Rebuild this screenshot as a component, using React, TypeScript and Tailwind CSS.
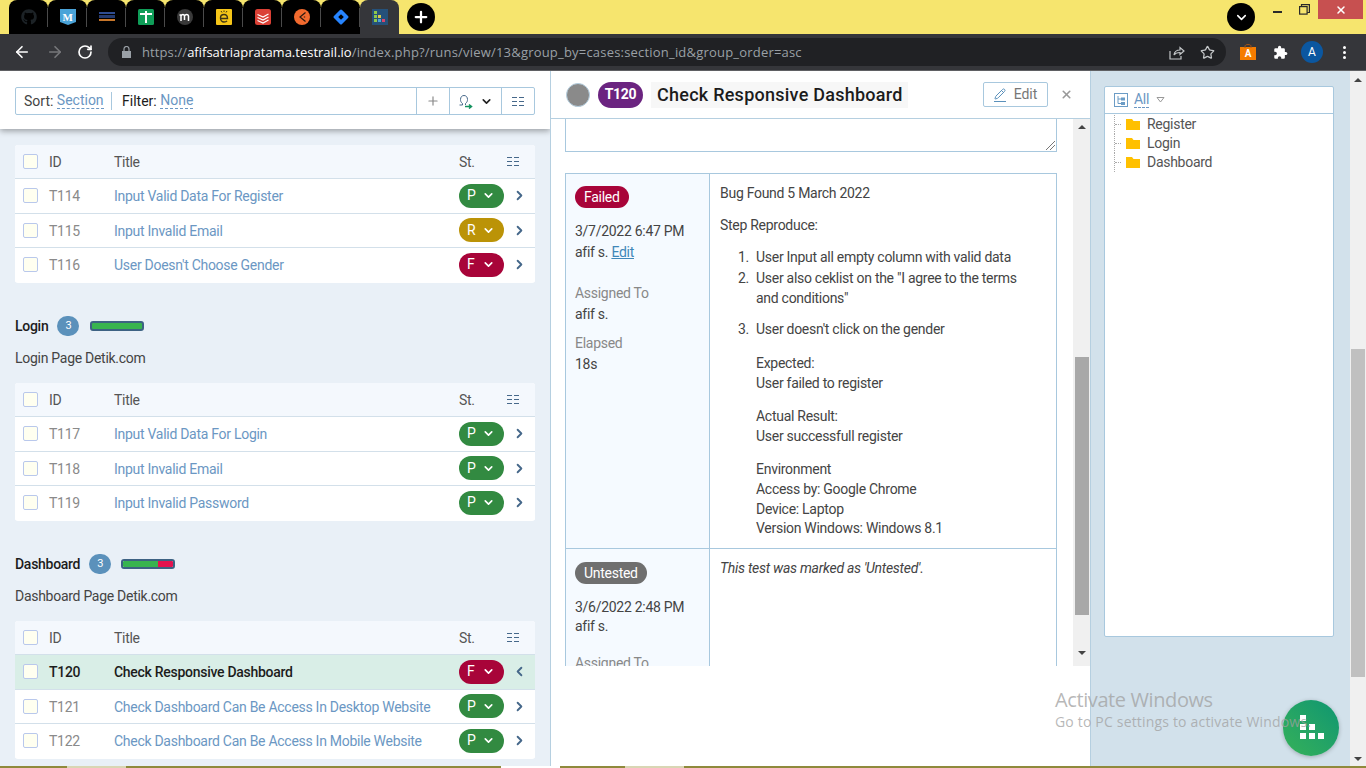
import React from "react";
import { FaGithub } from "react-icons/fa";
import { ArrowLeft, ArrowRight, RotateCw, Star, Plus, ChevronDown, ChevronRight, ChevronLeft, Pencil, X } from "lucide-react";

type St = "P" | "R" | "F";

function Columns() {
  return (
    <svg width="12" height="11" viewBox="0 0 12 11" fill="none" stroke="#46688a" strokeWidth="1" className="block">
      <path d="M0 1.500h5M7 1.500h5M0 5.500h5M7 5.500h5M0 9.500h5M7 9.500h5" />
    </svg>
  );
}

function Check() {
  return <span className="w-[15px] h-[15px] shrink-0 bg-[#fffff0] border border-[#b9c8ec] rounded-[2px]" />;
}

function Pill({ s }: { s: St }) {
  const bg = s === "P" ? "bg-[#328a41]" : s === "R" ? "bg-[#bb9307]" : "bg-[#a80439]";
  return (
    <span className={`w-[45px] h-[24px] rounded-full ${bg} text-white text-[14px] flex items-center pl-[8px] gap-[5px] shrink-0`}>
      <span className="w-[10px]">{s}</span>
      <ChevronDown size={13} strokeWidth={3} />
    </span>
  );
}

function Row({ id, title, s, active }: { id: string; title: string; s: St; active?: boolean }) {
  return (
    <div className={`h-[34.5px] flex items-center pl-[8px] border-t border-[#d3e0ea] ${active ? "bg-[#d9eee7]" : "bg-white"}`}>
      <Check />
      <span className={`ml-[11px] pt-[2px] w-[65px] text-[14px] ${active ? "text-[#1c1c1c] font-medium" : "text-[#8a8a8a]"}`}>{id}</span>
      <span className={`flex-1 pt-[2px] text-[14px] ${active ? "text-[#1c1c1c] font-medium" : "text-[#6b97c3]"}`}>{title}</span>
      <Pill s={s} />
      <span className="w-[31px] flex justify-center text-[#46688a]">
        {active ? <ChevronLeft size={15} strokeWidth={3} /> : <ChevronRight size={15} strokeWidth={3} />}
      </span>
    </div>
  );
}

function CaseTable({ rows }: { rows: { id: string; title: string; s: St; active?: boolean }[] }) {
  return (
    <div className="rounded-[3px] overflow-hidden mx-[15px] bg-white pb-[1.5px]">
      <div className="h-[33px] bg-[#f4f8fd] flex items-center pl-[8px] text-[14px] text-[#555]">
        <Check />
        <span className="ml-[11px] pt-[2px] w-[65px]">ID</span>
        <span className="flex-1 pt-[2px]">Title</span>
        <span className="w-[48px] pt-[2px]">St.</span>
        <span className="w-[28px]"><Columns /></span>
      </div>
      {rows.map((r) => <Row key={r.id} {...r} />)}
    </div>
  );
}

function Section({ name, desc, bar, rows }: { name: string; desc: string; bar: React.ReactNode; rows: { id: string; title: string; s: St; active?: boolean }[] }) {
  return (
    <div>
      <div className="mx-[15px] h-[24px] flex items-center">
        <span className="text-[14px] pt-[1px] font-medium text-[#1c1c1c]">{name}</span>
        <span className="ml-[9px] w-[22px] h-[20px] rounded-full bg-[#5b91bb] text-white text-[11px] flex items-center justify-center">3</span>
        {bar}
      </div>
      <div className="mx-[15px] mt-[10px] h-[20px] leading-[20px] text-[14px] text-[#444]">{desc}</div>
      <div className="mt-[15px]"><CaseTable rows={rows} /></div>
    </div>
  );
}

function Tab({ children, active }: { children: React.ReactNode; active?: boolean }) {
  return (
    <div className={`w-[39px] h-[34px] relative flex items-center justify-center rounded-t-[8px] ${active ? "bg-[#35363a]" : "bg-black"}`}>
      {children}
      {!active && <span className="absolute right-0 top-[8px] w-px h-[19px] bg-[#4a4a4a]" />}
    </div>
  );
}

function Favicons() {
  return (
    <>
      <Tab><FaGithub size={16} color="#1c2226" /></Tab>
      <Tab>
        <svg width="16" height="16" viewBox="0 0 16 16"><path d="M0 0h16v13l-8 3-8-3z" fill="#4aa3d8" /></svg>
        <span className="absolute text-white text-[11px] font-bold leading-none font-[family-name:'Liberation_Serif',serif]">M</span>
      </Tab>
      <Tab>
        <svg width="16" height="10" viewBox="0 0 16 10"><rect y="0" width="16" height="2" fill="#2f4d92" /><rect y="3" width="16" height="3" fill="#243a6f" /><rect y="7" width="16" height="2" fill="#c7762a" /></svg>
      </Tab>
      <Tab>
        <svg width="16" height="16" viewBox="0 0 16 16"><rect width="16" height="16" rx="1.500" fill="#0f9d58" /><path d="M2 5h12M8 2v12" stroke="#fff" strokeWidth="2" /></svg>
      </Tab>
      <Tab>
        <svg width="16" height="16" viewBox="0 0 16 16"><circle cx="8" cy="8" r="8" fill="#3a3a3a" /><path d="M4 12V6.500M4 7c1-2 3-2 3.500 0v4M7.500 7c1-2 3.500-2 4 0v5M2.500 6h2" stroke="#fff" strokeWidth="1.500" fill="none" /></svg>
      </Tab>
      <Tab>
        <svg width="16" height="16" viewBox="0 0 16 16"><rect width="16" height="16" rx="1" fill="#f5c518" /><path d="M4.500 9.500h7c0-3-1.500-4-3.500-4s-3.500 1.500-3.500 3.500 1.500 4 3.500 4c1.500 0 2.500-.5 3-1.200" stroke="#3d3315" strokeWidth="1.400" fill="none" /><path d="M5 2l1 1.500M8 1.500V3M11 2l-1 1.500" stroke="#3d3315" strokeWidth="1" /></svg>
      </Tab>
      <Tab>
        <svg width="16" height="16" viewBox="0 0 16 16"><rect width="16" height="16" rx="2.500" fill="#db4035" /><path d="M2.500 5.500l5.500 2.500 5.500-3M2.500 8.500l5.500 2.500 5.500-3M2.500 11.500l5.500 2.500 5.500-3" stroke="#fff" strokeWidth="1.200" fill="none" /></svg>
      </Tab>
      <Tab>
        <svg width="16" height="16" viewBox="0 0 16 16"><circle cx="8" cy="8" r="8" fill="#f26a2e" /><path d="M11.500 3.500L6 8l5.500 4.500M9.800 8h1.400" stroke="#2a1a10" strokeWidth="1.200" fill="none" /></svg>
      </Tab>
      <Tab>
        <svg width="16" height="16" viewBox="0 0 16 16"><rect x="2.300" y="2.300" width="11.400" height="11.400" rx="1.500" transform="rotate(45 8 8)" fill="#2684ff" /><rect x="6" y="6" width="4" height="4" transform="rotate(45 8 8)" fill="#000" /></svg>
      </Tab>
      <Tab active>
        <svg width="16" height="16" viewBox="0 0 16 16"><rect width="16" height="16" fill="#25517a" /><rect x="2" y="2" width="3" height="3" fill="#8fc84a" /><rect x="2" y="6" width="3" height="3" fill="#8fc84a" /><rect x="6" y="6" width="3" height="3" fill="#d9c94a" /><rect x="2" y="10" width="3" height="3" fill="#8fc84a" /><rect x="6" y="10" width="3" height="3" fill="#4aa3d8" /><rect x="10" y="10" width="3" height="3" fill="#d9456a" /></svg>
      </Tab>
    </>
  );
}

function Folder({ label }: { label: string }) {
  return (
    <div className="h-[19px] flex items-center">
      <span className="ml-[9px] w-[7px] h-full border-l border-dotted border-[#aaa] flex items-center">
        <span className="w-full border-t border-dotted border-[#aaa]" />
      </span>
      <svg width="14" height="13" viewBox="0 0 14 13" className="ml-[5px] shrink-0"><path d="M0 1h6l1.500 2H14v9H0z" fill="#ffc000" /></svg>
      <span className="ml-[7px] text-[14px] text-[#555]">{label}</span>
    </div>
  );
}

function P({ children, cls = "" }: { children: React.ReactNode; cls?: string }) {
  return <div className={`leading-[20px] ${cls}`}>{children}</div>;
}

export default function App() {
  return (
    <div className="w-[1366px] h-[768px] overflow-hidden relative flex flex-col tracking-[-0.28px] font-[family-name:Roboto,'Noto_Sans',sans-serif]">
      {/* Title bar */}
      <div className="h-[34px] bg-[#f6e56e] flex items-start shrink-0">
        <div className="ml-[9px] flex"><Favicons /></div>
        <div className="ml-[8px] mt-[3px] w-[28px] h-[28px] rounded-full bg-black flex items-center justify-center text-white">
          <Plus size={18} strokeWidth={3} />
        </div>
        <div className="flex-1" />
        <div className="mt-[3px] w-[28px] h-[28px] rounded-full bg-black flex items-center justify-center text-white">
          <ChevronDown size={15} strokeWidth={2.500} />
        </div>
        <div className="ml-[18px] mt-[11px] w-[9px] h-[2px] bg-[#2a2a2a]" />
        <svg width="11" height="11" viewBox="0 0 11 11" fill="none" stroke="#2a2a2a" strokeWidth="1.200" className="ml-[17px] mt-[4px]"><rect x="0.600" y="2.600" width="7.500" height="7.500" /><path d="M2.500 2.500V.6h7.900v7.900H8.200" /></svg>
        <div className="ml-[8px] w-[45px] h-[19px] bg-[#c75050] flex items-center justify-center text-white mr-[3px]">
          <X size={12} strokeWidth={3} />
        </div>
      </div>
      {/* Toolbar */}
      <div className="h-[36px] bg-[#35363a] flex items-center shrink-0 text-white tracking-normal">
        <span className="ml-[13px] w-[18px]"><ArrowLeft size={18} strokeWidth={2.200} /></span>
        <span className="ml-[15px] w-[18px] text-[#77787b]"><ArrowRight size={18} strokeWidth={2.200} /></span>
        <span className="ml-[13px] w-[18px]"><RotateCw size={16} strokeWidth={2.500} /></span>
        <div className="ml-[13px] w-[1118px] h-[28px] rounded-full bg-[#202124] flex items-center">
          <svg width="9" height="12" viewBox="0 0 9 12" className="ml-[14px]" fill="#9aa0a6"><path d="M0 5h9v7H0z" /><path d="M2 5V3a2.500 2.500 0 015 0v2" fill="none" stroke="#9aa0a6" strokeWidth="1.200" /></svg>
          <span className="ml-[11px] pt-[1px] text-[13px] text-[#9aa0a6] font-[family-name:'Open_Sans',sans-serif]">
            <span className="tracking-[0.1px]">https://</span><span className="text-white tracking-normal">afifsatriapratama.testrail.io</span><span className="tracking-[0.2px]">/index.php?/runs/view/13&amp;group_by=cases:section_id&amp;group_order=asc</span>
          </span>
          <span className="flex-1" />
          <svg width="16" height="15" viewBox="0 0 16 15" fill="none" stroke="#c4c7c9" strokeWidth="1.200" className="mr-[15px]">
            <path d="M1 6v8h11v-3M5 10c.5-3.500 3-5 6-5V2.500L15 6l-4 3.500V7.500C8.500 7.500 6.500 8 5 10z" />
          </svg>
          <Star size={15} color="#c4c7c9" strokeWidth={2} className="mr-[11px]" />
        </div>
        <div className="ml-[14px] w-[16px] h-[16px] relative flex items-center justify-center">
          <svg width="16" height="16" viewBox="0 0 16 16" className="absolute inset-0"><path d="M0 3h16v13H0z" fill="#f57c00" /><path d="M5 4V2.500C5 1 6 .6 8 .6s3 .4 3 1.900V4" fill="none" stroke="#a8561a" strokeWidth="1" /></svg>
          <span className="relative pt-[2px] text-[10px] font-bold">A</span>
        </div>
        <svg width="15" height="15" viewBox="0 0 24 24" fill="#fff" className="ml-[17px] shrink-0">
          <path d="M20.500 11H19V7a2 2 0 00-2-2h-4V3.500a2.500 2.500 0 00-5 0V5H4a2 2 0 00-2 2v3.800h1.500a2.700 2.700 0 010 5.400H2V20a2 2 0 002 2h3.800v-1.500a2.700 2.700 0 015.400 0V22H17a2 2 0 002-2v-4h1.500a2.500 2.500 0 000-5z" />
        </svg>
        <div className="ml-[13px] w-[22px] h-[22px] rounded-full bg-[#0b57a0] text-[12px] flex items-center justify-center">A</div>
        <div className="ml-[20px] flex flex-col gap-[2px]">
          <span className="w-[3px] h-[3px] rounded-full bg-white" />
          <span className="w-[3px] h-[3px] rounded-full bg-white" />
          <span className="w-[3px] h-[3px] rounded-full bg-white" />
        </div>
      </div>

      {/* Body */}
      <div className="flex h-[696px] shrink-0 border-t border-[#5f6063]">
        {/* Left */}
        <div className="w-[550px] bg-[#e9f0f7] flex flex-col overflow-hidden shrink-0">
          <div className="h-[58px] bg-white shadow-[0_2px_6px_rgba(0,0,0,0.35)] shrink-0 px-[15px] pt-[16px] relative">
            <div className="h-[28px] border border-[#a8c8de] rounded-[2px] flex items-center text-[14px] text-[#444] tracking-normal">
              <div className="flex-1 flex items-center pl-[8px]">
                <span>Sort:&nbsp;</span>
                <span className="text-[#6b97c3] border-b border-dashed border-[#6b97c3] leading-[15px]">Section</span>
                <span className="w-px h-[18px] bg-[#a8c8de] mx-[7px]" />
                <span className="text-[#1c1c1c]">&nbsp;Filter:&nbsp;</span>
                <span className="text-[#6b97c3] border-b border-dashed border-[#6b97c3] leading-[15px]">None</span>
              </div>
              <div className="w-[33px] h-full border-l border-[#a8c8de] flex items-center justify-center text-[#888]"><Plus size={14} strokeWidth={2} /></div>
              <div className="w-[52px] h-full border-l border-[#a8c8de] flex items-center justify-center gap-[7px]">
                <svg width="15" height="15" viewBox="0 0 15 15" fill="none">
                  <path d="M1.500 11h3V9.500C3 8.500 2.500 7 2.500 5.500 2.500 3 4 1.500 6 1.500S9.500 3 9.500 5.500c0 1.500-.5 3-2 4V11" stroke="#46688a" strokeWidth="1" />
                  <path d="M7 12.500h6M11 10.500l2.500 2-2.500 2" stroke="#13925f" strokeWidth="1.500" />
                </svg>
                <ChevronDown size={13} strokeWidth={3} color="#222" />
              </div>
              <div className="w-[33px] h-full border-l border-[#a8c8de] flex items-center justify-center"><Columns /></div>
            </div>
          </div>
          <div className="pt-[16px]">
            <CaseTable rows={[
              { id: "T114", title: "Input Valid Data For Register", s: "P" },
              { id: "T115", title: "Input Invalid Email", s: "R" },
              { id: "T116", title: "User Doesn't Choose Gender", s: "F" },
            ]} />
            <div className="mt-[31px]">
              <Section name="Login" desc="Login Page Detik.com"
                bar={<span className="ml-[11px] w-[54px] h-[10px] rounded-[3px] bg-[#38b44f] border-2 border-[#3d6283]" />}
                rows={[
                  { id: "T117", title: "Input Valid Data For Login", s: "P" },
                  { id: "T118", title: "Input Invalid Email", s: "P" },
                  { id: "T119", title: "Input Invalid Password", s: "P" },
                ]} />
            </div>
            <div className="mt-[31px]">
              <Section name="Dashboard" desc="Dashboard Page Detik.com"
                bar={<span className="ml-[10px] w-[54px] h-[10px] rounded-[3px] border-2 border-[#3d6283] flex overflow-hidden"><span className="w-[35px] bg-[#38b44f]" /><span className="flex-1 bg-[#e3134f]" /></span>}
                rows={[
                  { id: "T120", title: "Check Responsive Dashboard", s: "F", active: true },
                  { id: "T121", title: "Check Dashboard Can Be Access In Desktop Website", s: "P" },
                  { id: "T122", title: "Check Dashboard Can Be Access In Mobile Website", s: "P" },
                ]} />
            </div>
          </div>
        </div>

        {/* Middle */}
        <div className="w-[540px] bg-white border-l border-[#b5cfe0] shrink-0 flex flex-col">
          <div className="h-[48px] border-b border-[#b5cfe0] flex items-center shrink-0 pl-[15px]">
            <span className="w-[24px] h-[24px] rounded-full bg-[#8a8a8a] border border-[#b5cfe0]" />
            <span className="ml-[8px] w-[45px] h-[26px] rounded-full bg-[#6b2480] text-white text-[14px] font-bold flex items-center justify-center">T120</span>
            <span className="ml-[8px] w-[257px] h-[26px] bg-[#f7f7f7] pl-[6px] text-[18px] font-medium text-[#1c1c1c] leading-[26px] tracking-[0.25px]">Check Responsive Dashboard</span>
            <div className="ml-[75px] w-[65px] h-[25px] border border-[#a8c8de] rounded-[2px] flex items-center justify-center gap-[8px] text-[14px] text-[#777] tracking-normal">
              <span className="border-b border-[#5b91bb] pb-[1px]"><Pencil size={12} color="#5b91bb" /></span>
              Edit
            </div>
            <span className="ml-[12px] text-[#999]"><X size={13} strokeWidth={3} /></span>
          </div>
          <div className="h-[547px] shrink-0 flex overflow-hidden">
            <div className="flex-1 pl-[14px] pr-[16px] overflow-hidden">
              <div className="h-[33px] border-x border-b border-[#a8c8de] relative">
                <svg width="9" height="9" viewBox="0 0 9 9" className="absolute right-[1px] bottom-[1px]" stroke="#777" strokeWidth="1"><path d="M0 9L9 0M4 9l5-5" /></svg>
              </div>
              <div className="mt-[21px] border border-[#a8c8de] text-[14px] text-[#444]">
                <div className="flex h-[375px] border-b border-[#a8c8de]">
                  <div className="w-[144px] bg-[#f5faff] border-r border-[#a8c8de] pl-[9px] pt-[12px] shrink-0">
                    <span className="inline-flex h-[22px] px-[9px] items-center rounded-full bg-[#a80439] text-white">Failed</span>
                    <P cls="mt-[13px]">3/7/2022 6:47 PM</P>
                    <P cls="mt-[1px]">afif s. <span className="text-[#3f87b8] underline">Edit</span></P>
                    <P cls="mt-[21px] text-[#888]">Assigned To</P>
                    <P cls="mt-[1px]">afif s.</P>
                    <P cls="mt-[9px] text-[#888]">Elapsed</P>
                    <P cls="mt-[1px]">18s</P>
                  </div>
                  <div className="flex-1 pl-[10px] pt-[9px]">
                    <P>Bug Found 5 March 2022</P>
                    <P cls="mt-[12px]">Step Reproduce:</P>
                    <div className="mt-[12px] flex"><span className="w-[36px] text-right pr-[7px]">1.</span><P>User Input all empty column with valid data</P></div>
                    <div className="flex"><span className="w-[36px] text-right pr-[7px]">2.</span><P>User also ceklist on the "I agree to the terms<br />and conditions"</P></div>
                    <div className="mt-[11px] flex"><span className="w-[36px] text-right pr-[7px]">3.</span><P>User doesn't click on the gender</P></div>
                    <div className="ml-[36px]">
                      <P cls="mt-[13px]">Expected:</P>
                      <P>User failed to register</P>
                      <P cls="mt-[13px]">Actual Result:</P>
                      <P>User successfull register</P>
                      <P cls="mt-[13px]">Environment</P>
                      <P>Access by: Google Chrome</P>
                      <P>Device: Laptop</P>
                      <P cls="-mt-px">Version Windows: Windows 8.1</P>
                    </div>
                  </div>
                </div>
                <div className="flex h-[200px]">
                  <div className="w-[144px] bg-[#f5faff] border-r border-[#a8c8de] pl-[9px] pt-[13px] shrink-0">
                    <span className="inline-flex h-[22px] px-[9px] items-center rounded-full bg-[#6f6f6f] text-white">Untested</span>
                    <P cls="mt-[13px]">3/6/2022 2:48 PM</P>
                    <P cls="-mt-px">afif s.</P>
                    <P cls="mt-[17px] text-[#888]">Assigned To</P>
                  </div>
                  <div className="flex-1 pl-[10px] pt-[9px] italic"><P>This test was marked as 'Untested'.</P></div>
                </div>
              </div>
            </div>
            <div className="w-[17px] bg-[#f0f0f0] flex flex-col items-center shrink-0">
              <span className="mt-[6px] w-0 h-0 border-x-[4px] border-x-transparent border-b-[4px] border-b-[#444]" />
              <span className="mt-[228px] w-[14px] h-[258px] bg-[#a8a8a8]" />
              <span className="mt-[36px] w-0 h-0 border-x-[4px] border-x-transparent border-t-[4px] border-t-[#444]" />
            </div>
          </div>
        </div>

        {/* Right */}
        <div className="w-[260px] bg-[#d2e1eb] border-l border-[#b5cfe0] pl-[13px] pt-[15px] shrink-0">
          <div className="w-[230px] h-[551px] bg-white border border-[#a8c8de] rounded-[2px]">
            <div className="h-[27px] border-b border-[#a8c8de] flex items-center pl-[9px]">
              <svg width="14" height="14" viewBox="0 0 14 14" fill="none" stroke="#6b9cc6"><rect x="0.500" y="0.500" width="13" height="13" /><path d="M4 3v7.500h3M4 6h3" /><rect x="7.500" y="5" width="3" height="2" fill="#6b9cc6" /><rect x="7.500" y="9.500" width="3" height="2" fill="#6b9cc6" /></svg>
              <span className="ml-[6px] text-[14px] text-[#6b97c3] border-b border-dashed border-[#6b97c3] leading-[15px]">All</span>
              <svg width="9" height="6" viewBox="0 0 9 6" className="ml-[7px]" fill="none" stroke="#999"><path d="M1 .5h7L4.500 5z" /></svg>
            </div>
            <div className="pt-[1px]">
              <Folder label="Register" />
              <Folder label="Login" />
              <Folder label="Dashboard" />
            </div>
          </div>
        </div>

        {/* Page scrollbar */}
        <div className="w-[16px] bg-[#f0f0f0] flex flex-col items-center shrink-0">
          <span className="mt-[7px] w-0 h-0 border-x-[4px] border-x-transparent border-b-[4px] border-b-[#444]" />
          <span className="mt-[267px] w-[14px] h-[328px] bg-[#c0c0c0]" />
          <span className="mt-[80px] w-0 h-0 border-x-[4px] border-x-transparent border-t-[4px] border-t-[#444]" />
        </div>
      </div>
      {/* Strip of the task bar below the window */}
      <div className="h-[2px] bg-[#8f8a3c] shrink-0 flex">
        <span className="ml-[67px] w-[59px] bg-[#d9d6b4]" />
        <span className="ml-[375px] w-[59px] bg-white" />
        <span className="ml-[65px] w-[59px] bg-[#d9d6b4]" />
      </div>

      {/* Overlays */}
      <div className="absolute left-[1283px] top-[700px] w-[56px] h-[56px] rounded-full bg-linear-to-tr from-[#35b158] to-[#0b9670] shadow-[0_1px_4px_rgba(0,0,0,0.25)]">
        <div className="absolute left-[17px] top-[15px] w-[6px] h-[6px] bg-white" />
        <div className="absolute left-[17px] top-[24px] w-[6px] h-[6px] bg-white" />
        <div className="absolute left-[26px] top-[24px] w-[6px] h-[6px] bg-white" />
        <div className="absolute left-[17px] top-[33px] w-[6px] h-[6px] bg-white" />
        <div className="absolute left-[26px] top-[33px] w-[6px] h-[6px] bg-white" />
        <div className="absolute left-[35px] top-[33px] w-[6px] h-[6px] bg-white" />
      </div>
      <div className="absolute left-[1055px] top-[688px] text-[#a0a0a0]/75 pointer-events-none font-[family-name:'Open_Sans',sans-serif]">
        <div className="text-[20px] leading-[24px] tracking-[-0.4px]">Activate Windows</div>
        <div className="text-[14px] leading-[20px] tracking-[0.18px]">Go to PC settings to activate Windows.</div>
      </div>
    </div>
  );
}
